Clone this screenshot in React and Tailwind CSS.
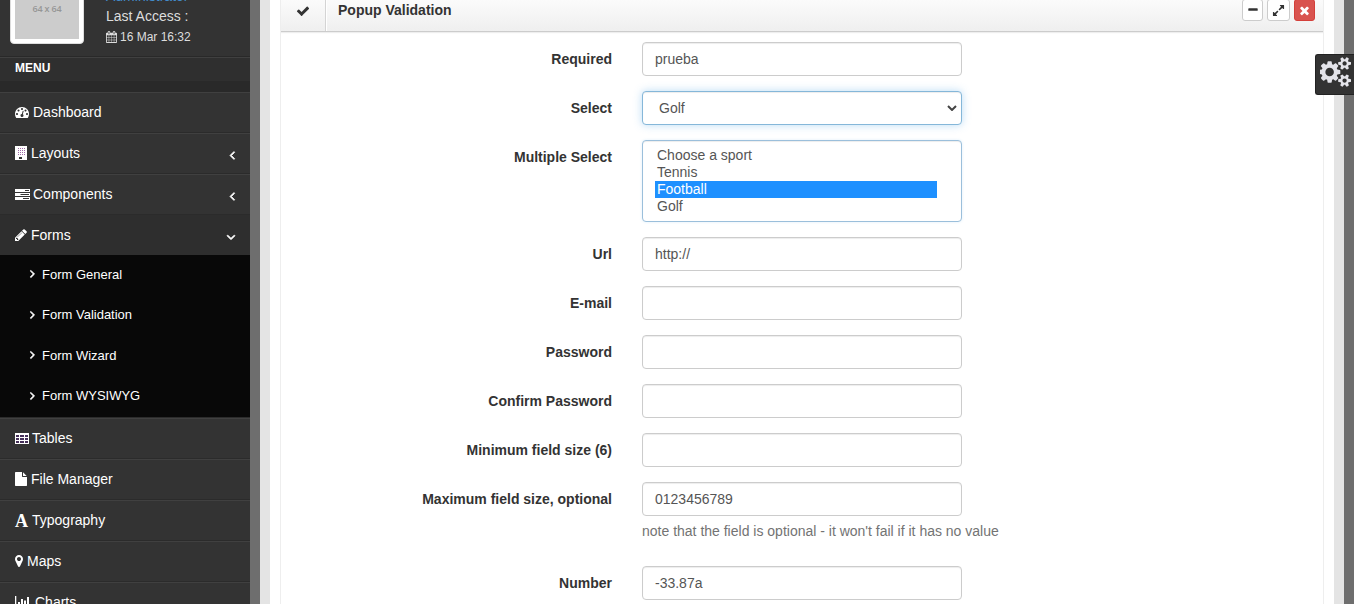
const paths = {
  check:
    "M1671 566q0 40-28 68l-724 724-136 136q-28 28-68 28t-68-28l-136-136-362-362q-28-28-28-68t28-68l136-136q28-28 68-28t68 28l294 295 656-657q28-28 68-28t68 28l136 136q28 28 28 68z",
  times:
    "M1490 1322q0 40-28 68l-136 136q-28 28-68 28t-68-28l-294-294-294 294q-28 28-68 28t-68-28l-136-136q-28-28-28-68t28-68l294-294-294-294q-28-28-28-68t28-68l136-136q28-28 68-28t68 28l294 294 294-294q28-28 68-28t68 28l136 136q28 28 28 68t-28 68l-294 294 294 294q28 28 28 68z",
  minus:
    "M1600 736v192q0 40-28 68t-68 28h-1216q-40 0-68-28t-28-68v-192q0-40 28-68t68-28h1216q40 0 68 28t28 68z",
  expand:
    "M883 1056q0 13-10 23l-332 332 144 144q19 19 19 45t-19 45-45 19h-448q-26 0-45-19t-19-45v-448q0-26 19-45t45-19 45 19l144 144 332-332q10-10 23-10t23 10l114 114q10 10 10 23zm781-864v448q0 26-19 45t-45 19-45-19l-144-144-332 332q-10 10-23 10t-23-10l-114-114q-10-10-10-23t10-23l332-332-144-144q-19-19-19-45t19-45 45-19h448q26 0 45 19t19 45z",
  left:
    "M1203 544q0 13-10 23l-393 393 393 393q10 10 10 23t-10 23l-50 50q-10 10-23 10t-23-10l-466-466q-10-10-10-23t10-23l466-466q10-10 23-10t23 10l50 50q10 10 10 23z",
  right:
    "M1171 960q0 13-10 23l-466 466q-10 10-23 10t-23-10l-50-50q-10-10-10-23t10-23l393-393-393-393q-10-10-10-23t10-23l50-50q10-10 23-10t23 10l466 466q10 10 10 23z",
  down:
    "M1395 736q0 13-10 23l-466 466q-10 10-23 10t-23-10l-466-466q-10-10-10-23t10-23l50-50q10-10 23-10t23 10l393 393 393-393q10-10 23-10t23 10l50 50q10 10 10 23z",
  calendar:
    "M192 1664h288v-288h-288v288zm352 0h320v-288h-320v288zm-352-352h288v-320h-288v320zm352 0h320v-320h-320v320zm-352-384h288v-288h-288v288zm736 736h320v-288h-320v288zm-384-736h320v-288h-320v288zm768 736h288v-288h-288v288zm-384-352h320v-320h-320v320zm-352-864v-288q0-13-9.5-22.5t-22.5-9.5h-64q-13 0-22.5 9.5t-9.5 22.5v288q0 13 9.5 22.5t22.5 9.5h64q13 0 22.5-9.5t9.5-22.5zm736 864h288v-320h-288v320zm-384-384h320v-288h-320v288zm384 0h288v-288h-288v288zm32-480v-288q0-13-9.5-22.5t-22.5-9.5h-64q-13 0-22.5 9.5t-9.5 22.5v288q0 13 9.5 22.5t22.5 9.5h64q13 0 22.5-9.5t9.5-22.5zm384-64v1280q0 52-38 90t-90 38h-1408q-52 0-90-38t-38-90v-1280q0-52 38-90t90-38h128v-96q0-66 47-113t113-47h64q66 0 113 47t47 113v96h384v-96q0-66 47-113t113-47h64q66 0 113 47t47 113v96h128q52 0 90 38t38 90z",
  marker:
    "M1152 640q0-106-75-181t-181-75-181 75-75 181 75 181 181 75 181-75 75-181zm256 0q0 109-33 179l-364 774q-16 33-47.5 52t-67.5 19-67.5-19-46.5-52l-365-774q-33-70-33-179 0-212 150-362t362-150 362 150 150 362z",
  dashboard:
    "M384 1152q0-53-37.5-90.5t-90.5-37.5-90.5 37.5-37.5 90.5 37.5 90.5 90.5 37.5 90.5-37.5 37.5-90.5zm192-448q0-53-37.5-90.5t-90.5-37.5-90.5 37.5-37.5 90.5 37.5 90.5 90.5 37.5 90.5-37.5 37.5-90.5zm428 481l101-382q6-26-7.5-48.5t-38.5-29.5-48 6.5-30 39.5l-101 382q-60 5-107 43.5t-63 98.5q-20 77 20 146t117 89 146-20 89-117q16-60-6-117t-72-91zm660-33q0-53-37.5-90.5t-90.5-37.5-90.5 37.5-37.5 90.5 37.5 90.5 90.5 37.5 90.5-37.5 37.5-90.5zm-640-640q0-53-37.5-90.5t-90.5-37.5-90.5 37.5-37.5 90.5 37.5 90.5 90.5 37.5 90.5-37.5 37.5-90.5zm448 192q0-53-37.5-90.5t-90.5-37.5-90.5 37.5-37.5 90.5 37.5 90.5 90.5 37.5 90.5-37.5 37.5-90.5zm320 448q0 261-141 483-19 29-54 29h-1402q-35 0-54-29-141-221-141-483 0-182 71-348t191-286 286-191 348-71 348 71 286 191 191 286 71 348z",
  pencil:
    "M491 1536l91-91-235-235-91 91v107h128v128h107zm523-928q0-22-22-22-10 0-17 7l-542 542q-7 7-7 17 0 22 22 22 10 0 17-7l542-542q7-7 7-17zm-54-192l416 416-832 832h-416v-416zm683 96q0 53-37 90l-166 166-416-416 166-165q36-38 90-38 53 0 91 38l235 234q37 39 37 91z",
  file:
    "M1152 512v-472q22 14 36 28l408 408q14 14 28 36h-472zm-128 32q0 40 28 68t68 28h544v1056q0 40-28 68t-68 28h-1344q-40 0-68-28t-28-68v-1600q0-40 28-68t68-28h800v544z",
  cogs:
    "M832 896q0-106-75-181t-181-75-181 75-75 181 75 181 181 75 181-75 75-181zm768 512q0-52-38-90t-90-38-90 38-38 90q0 53 37.5 90.5t90.5 37.5 90.5-37.5 37.5-90.5zm0-1024q0-52-38-90t-90-38-90 38-38 90q0 53 37.5 90.5t90.5 37.5 90.5-37.5 37.5-90.5zm-384 421v185q0 10-7 19.5t-16 10.5l-155 24q-11 35-32 76 34 48 90 115 7 11 7 20 0 12-7 19-23 30-82.5 89.5t-78.5 59.5q-11 0-21-7l-115-90q-37 19-77 31-11 108-23 155-7 24-30 24h-186q-11 0-20-7.5t-10-17.5l-23-153q-34-10-75-31l-118 89q-7 7-20 7-11 0-21-8-144-133-144-160 0-9 7-19 10-14 41-53t47-61q-23-44-35-82l-152-24q-10-1-17-9.5t-7-19.5v-185q0-10 7-19.5t16-10.5l155-24q11-35 32-76-34-48-90-115-7-11-7-20 0-12 7-20 22-30 82-89t79-59q11 0 21 7l115 90q34-18 77-32 11-108 23-154 7-24 30-24h186q11 0 20 7.5t10 17.5l23 153q34 10 75 31l118-89q8-7 20-7 11 0 21 8 144 133 144 160 0 8-7 19-12 16-42 54t-45 60q23 48 34 82l152 23q10 2 17 10.5t7 19.5zm640 533v140q0 16-149 31-12 27-30 52 51 113 51 138 0 4-4 7-122 71-124 71-8 0-46-47t-52-68q-20 2-30 2t-30-2q-14 21-52 68t-46 47q-2 0-124-71-4-3-4-7 0-25 51-138-18-25-30-52-149-15-149-31v-140q0-16 149-31 13-29 30-52-51-113-51-138 0-4 4-7 4-2 35-20t59-34 30-16q8 0 46 46.5t52 67.5q20-2 30-2t30 2q51-71 92-112l6-2q4 0 124 70 4 3 4 7 0 25-51 138 17 23 30 52 149 15 149 31zm0-1024v140q0 16-149 31-12 27-30 52 51 113 51 138 0 4-4 7-122 71-124 71-8 0-46-47t-52-68q-20 2-30 2t-30-2q-14 21-52 68t-46 47q-2 0-124-71-4-3-4-7 0-25 51-138-18-25-30-52-149-15-149-31v-140q0-16 149-31 13-29 30-52-51-113-51-138 0-4 4-7 4-2 35-20t59-34 30-16q8 0 46 46.5t52 67.5q20-2 30-2t30 2q51-71 92-112l6-2q4 0 124 70 4 3 4 7 0 25-51 138 17 23 30 52 149 15 149 31z",
};

function Icon({ name, box = "0 0 1792 1792", className }) {
  return (
    <svg viewBox={box} fill="currentColor" className={`shrink-0 ${className}`}>
      <path d={paths[name]} />
    </svg>
  );
}

const chevron = "stroke-current stroke-[100]";

function BuildingIcon() {
  return (
    <svg viewBox="0 0 12 14" className="mb-[2px] h-[14px] w-3 shrink-0" shapeRendering="crispEdges">
      <path fill="#fff" d="M0 0h12v14H0z" />
      {[2, 4, 6, 8].map((y) =>
        [2, 4, 6, 8].map((x) => (
          <rect key={`${x}-${y}`} x={x + 0.5} y={y} width="1" height="1" fill="#a06ba8" />
        ))
      )}
      <path fill="#333" d="M4 11h3v2H4z" />
    </svg>
  );
}

function TasksIcon() {
  return (
    <svg viewBox="0 0 15 11" className="mb-px h-[11px] w-[15px] shrink-0">
      <path fill="#fff" d="M0 0h15v3H0zM0 4h15v3H0zM0 8h15v3H0z" />
      <path fill="#333" d="M10 1h4v1h-4zM5.500 5h8.500v1H5.500zM8 9h6v1H8z" />
    </svg>
  );
}

function TableIcon() {
  return (
    <svg viewBox="0 0 14 11" className="mb-px h-[11px] w-[14px] shrink-0" shapeRendering="crispEdges">
      <rect width="14" height="11" fill="#fff" />
      <path
        fill="#46305a"
        d="M1 2h3v2H1zM5 2h4v2H5zM10 2h3v2h-3zM1 5h3v2H1zM5 5h4v2H5zM10 5h3v2h-3zM1 8h3v2H1zM5 8h4v2H5zM10 8h3v2h-3z"
      />
    </svg>
  );
}

function ChartIcon() {
  return (
    <svg viewBox="0 0 16 13" className="mb-px h-[13px] w-4 shrink-0">
      <path fill="#fff" d="M0 0h1.300v11.500H15V13H0zM3 6h2v4.500H3zM6 3h2v7.500H6zM9 4.500h2v6H9zM12 1h2v9.500h-2z" />
    </svg>
  );
}

function MenuItem({ icon, label, gap = "gap-[3px]", arrow }) {
  return (
    <li
      className={`flex h-[41px] items-center border-t border-b border-t-[#404040] border-b-[#2b2b2b] bg-[#333] pr-[10px] pl-[15px] text-white ${gap}`}
    >
      {icon}
      <span>{label}</span>
      {arrow && <Icon name={arrow} className={`mt-[3px] ml-auto size-[14px] ${chevron}`} box="100 0 1792 1792" />}
    </li>
  );
}

function Sidebar() {
  return (
    <aside className="flex h-full w-[250px] flex-col bg-[#333]">
      <div className="flex h-[57px] shrink-0 items-end border-b border-[#292929]">
        <div className="mb-3 ml-[10px] h-[74px] w-[74px] shrink-0 rounded border border-[#ddd] bg-white p-1">
          <div className="flex h-full items-center justify-center bg-[#ccc] pt-1 font-['Open_Sans',sans-serif] text-[9px] font-semibold tracking-[-0.2px] text-[#969696]">
            64 x 64
          </div>
        </div>
        <div className="mb-[9px] ml-[22px] flex flex-col text-[#ddd]">
          <span className="leading-5 text-[#428bca]">Administrator</span>
          <span className="mb-px leading-5">Last Access :</span>
          <span className="flex items-center gap-[3px] text-[12px] leading-5">
            <Icon name="calendar" className="mb-px h-3 w-[11px]" box="64 0 1664 1792" />
            16 Mar 16:32
          </span>
        </div>
      </div>
      <div className="h-6 shrink-0 border-t border-[#404040] bg-[#2f2f2f] pl-[15px] text-[12px] leading-5 font-bold text-white">
        MENU
      </div>
      <div className="h-[11px] shrink-0 bg-[#292929]" />
      <ul className="shrink-0">
        <MenuItem icon={<Icon name="dashboard" className="mb-px size-[14px]" />} label="Dashboard" gap="gap-1" />
        <MenuItem icon={<BuildingIcon />} label="Layouts" gap="gap-1" arrow="left" />
        <MenuItem icon={<TasksIcon />} label="Components" gap="gap-[3px]" arrow="left" />
        <li>
          <div className="flex h-10 items-center gap-1 bg-[#2e2e2e] pr-3 pl-[15px] text-white">
            <Icon name="pencil" className="h-[14px] w-3" box="128 0 1536 1792" />
            <span>Forms</span>
            <Icon name="down" className={`mt-1 ml-auto size-[14px] ${chevron}`} />
          </div>
          <ul className="flex h-[162px] flex-col bg-[#080808] text-[13px] text-white">
            {["Form General", "Form Validation", "Form Wizard", "Form WYSIWYG"].map((label) => (
              <li key={label} className="flex h-[40.500px] items-center gap-[3px] pb-[2px] pl-[26px]">
                <Icon name="right" className={`mb-px size-[13px] ${chevron}`} />
                {label}
              </li>
            ))}
          </ul>
        </li>
        <li className="h-px bg-[#2b2b2b]" />
        <MenuItem icon={<TableIcon />} label="Tables" />
        <MenuItem
          icon={<Icon name="file" className="mb-[2px] h-[14px] w-3" box="128 0 1536 1792" />}
          label="File Manager"
          gap="gap-1"
        />
        <MenuItem
          icon={<span className="w-[13px] font-['Liberation_Serif',serif] text-[18px] leading-5 font-bold">A</span>}
          label="Typography"
          gap="gap-1"
        />
        <MenuItem
          icon={<Icon name="marker" className="mb-[2px] h-[14px] w-2" box="384 0 1024 1792" />}
          label="Maps"
          gap="gap-1"
        />
        <MenuItem icon={<ChartIcon />} label="Charts" gap="gap-1" />
      </ul>
    </aside>
  );
}

const box = "h-[34px] rounded border px-3 text-[#555] shadow-[inset_0_1px_1px_rgba(0,0,0,0.075)] flex items-center";

function Field({ label, value, note }) {
  return (
    <div className="mb-[15px] flex">
      <div className="w-[331px] pt-[7px] text-right leading-5 font-bold text-[#333]">{label}</div>
      <div className="ml-[30px]">
        <div className={`${box} w-80 border-[#ccc] bg-white`}>{value}</div>
        {note && <p className="mt-[5px] leading-5 whitespace-nowrap text-[#737373]">{note}</p>}
      </div>
    </div>
  );
}

function SelectField() {
  return (
    <div className="mb-[15px] flex">
      <div className="w-[331px] pt-[7px] text-right leading-5 font-bold text-[#333]">Select</div>
      <div className="ml-[30px] flex h-[34px] w-80 items-center justify-between rounded border border-[#85b7d9] bg-white pr-1 pl-4 text-[#555] shadow-[inset_0_1px_1px_rgba(0,0,0,0.075),0_0_8px_rgba(102,175,233,0.45)]">
        Golf
        <svg viewBox="0 0 10 6" className="h-[6px] w-[10px]" fill="none" stroke="#444" strokeWidth="2">
          <path d="M1 1l4 4 4-4" />
        </svg>
      </div>
    </div>
  );
}

function MultiSelectField() {
  return (
    <div className="mb-[15px] flex">
      <div className="w-[331px] pt-[7px] text-right leading-5 font-bold text-[#333]">Multiple Select</div>
      <ul className="ml-[30px] h-[82px] w-80 rounded border border-[#9bbfdb] bg-white py-[6px] pr-6 pl-3 leading-[17px] text-[#555] shadow-[inset_0_1px_1px_rgba(0,0,0,0.075),0_0_3px_rgba(102,175,233,0.2)]">
        {["Choose a sport", "Tennis", "Football", "Golf"].map((sport) => (
          <li key={sport} className={`h-[17px] pl-[2px] ${sport === "Football" ? "bg-[#1e90ff] text-white" : ""}`}>
            {sport}
          </li>
        ))}
      </ul>
    </div>
  );
}

function Panel() {
  const button = "flex h-[22px] items-center justify-center rounded-[3px] border";
  return (
    <section className="ml-[10px] h-full w-[1044px] border-x border-[#eee]">
      <header className="flex h-8 items-stretch overflow-hidden border-b border-[#ccc] bg-linear-to-b from-[#fbfbfb] to-[#efefef] shadow-[0_1px_1px_#eee]">
        <div className="flex w-[45px] items-start justify-center border-r border-[#d4d4d4] pt-1 text-[#333]">
          <Icon name="check" className="size-[14px]" />
        </div>
        <h5 className="flex-1 border-l border-white pl-[11px] leading-5 font-bold text-[#333]">Popup Validation</h5>
        <div className="-mt-px mr-2 flex gap-1">
          <span className={`${button} w-[21px] border-[#ccc] bg-white text-[#333]`}>
            <Icon name="minus" className="size-3" />
          </span>
          <span className={`${button} w-[23px] border-[#ccc] bg-white text-[#333]`}>
            <Icon name="expand" className="size-[13px]" />
          </span>
          <span className={`${button} w-[21px] border-[#d43f3a] bg-[#d9534f] text-white`}>
            <Icon name="times" className="size-[13px]" />
          </span>
        </div>
      </header>
      <form className="pt-[10px]">
        <Field label="Required" value="prueba" />
        <SelectField />
        <MultiSelectField />
        <Field label="Url" value="http://" />
        <Field label="E-mail" />
        <Field label="Password" />
        <Field label="Confirm Password" />
        <Field label="Minimum field size (6)" />
        <Field
          label="Maximum field size, optional"
          value="0123456789"
          note="note that the field is optional - it won't fail if it has no value"
        />
        <div className="-mt-px h-[11px]" />
        <Field label="Number" value="-33.87a" />
      </form>
    </section>
  );
}

export default function App() {
  return (
    <div className="h-[604px] overflow-hidden bg-white font-['Liberation_Sans',Arial,sans-serif] text-[14px]">
      <div className="relative flex h-full w-[1354px] bg-[#6e6e6e]">
        <Sidebar />
        <main className="ml-[10px] h-full w-[1084px] border-x-[10px] border-[#e4e4e4] bg-white">
          <Panel />
        </main>
        <div className="absolute top-[54px] right-0 flex h-[41px] w-[39px] items-start rounded-l-[3px] border border-r-0 border-[#222] bg-[#333] pt-[2px] pl-1 text-[#e4e4ea]">
          <Icon name="cogs" className="h-[30px] w-[31px]" box="0 0 1856 1792" />
        </div>
      </div>
    </div>
  );
}
